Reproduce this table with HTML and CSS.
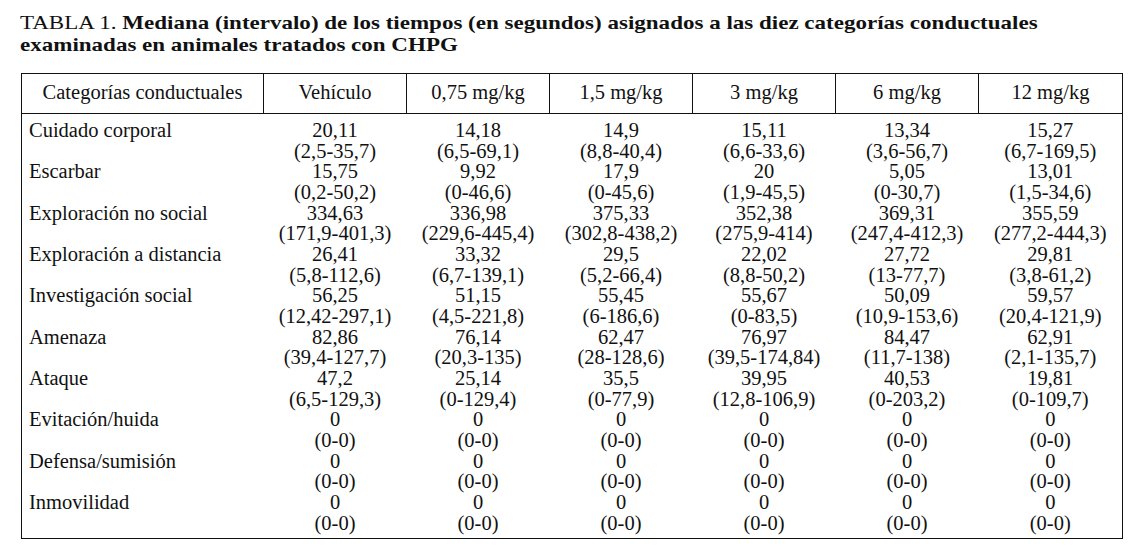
FILE: index.html
```html
<!DOCTYPE html>
<html lang="es">
<head>
<meta charset="utf-8">
<title>Tabla 1</title>
<link rel="stylesheet" href="styles.css">
</head>
<body>
<div class="page">
  <h1 class="title"><span class="label">TABLA 1.</span> Mediana (intervalo) de los tiempos (en segundos) asignados a las diez categorías conductuales<br>examinadas en animales tratados con CHPG</h1>
  <table class="data">
    <colgroup>
      <col class="c-cat"><col class="c-val"><col class="c-val"><col class="c-val"><col class="c-val"><col class="c-val"><col class="c-last">
    </colgroup>
    <thead>
      <tr>
        <th>Categorías conductuales</th>
        <th>Vehículo</th>
        <th>0,75 mg/kg</th>
        <th>1,5 mg/kg</th>
        <th>3 mg/kg</th>
        <th>6 mg/kg</th>
        <th>12 mg/kg</th>
      </tr>
    </thead>
    <tbody>
      <tr>
        <td class="cat">Cuidado corporal</td>
        <td>20,11<br>(2,5-35,7)</td>
        <td>14,18<br>(6,5-69,1)</td>
        <td>14,9<br>(8,8-40,4)</td>
        <td>15,11<br>(6,6-33,6)</td>
        <td>13,34<br>(3,6-56,7)</td>
        <td>15,27<br>(6,7-169,5)</td>
      </tr>
      <tr>
        <td class="cat">Escarbar</td>
        <td>15,75<br>(0,2-50,2)</td>
        <td>9,92<br>(0-46,6)</td>
        <td>17,9<br>(0-45,6)</td>
        <td>20<br>(1,9-45,5)</td>
        <td>5,05<br>(0-30,7)</td>
        <td>13,01<br>(1,5-34,6)</td>
      </tr>
      <tr>
        <td class="cat">Exploración no social</td>
        <td>334,63<br>(171,9-401,3)</td>
        <td>336,98<br>(229,6-445,4)</td>
        <td>375,33<br>(302,8-438,2)</td>
        <td>352,38<br>(275,9-414)</td>
        <td>369,31<br>(247,4-412,3)</td>
        <td>355,59<br>(277,2-444,3)</td>
      </tr>
      <tr>
        <td class="cat">Exploración a distancia</td>
        <td>26,41<br>(5,8-112,6)</td>
        <td>33,32<br>(6,7-139,1)</td>
        <td>29,5<br>(5,2-66,4)</td>
        <td>22,02<br>(8,8-50,2)</td>
        <td>27,72<br>(13-77,7)</td>
        <td>29,81<br>(3,8-61,2)</td>
      </tr>
      <tr>
        <td class="cat">Investigación social</td>
        <td>56,25<br>(12,42-297,1)</td>
        <td>51,15<br>(4,5-221,8)</td>
        <td>55,45<br>(6-186,6)</td>
        <td>55,67<br>(0-83,5)</td>
        <td>50,09<br>(10,9-153,6)</td>
        <td>59,57<br>(20,4-121,9)</td>
      </tr>
      <tr>
        <td class="cat">Amenaza</td>
        <td>82,86<br>(39,4-127,7)</td>
        <td>76,14<br>(20,3-135)</td>
        <td>62,47<br>(28-128,6)</td>
        <td>76,97<br>(39,5-174,84)</td>
        <td>84,47<br>(11,7-138)</td>
        <td>62,91<br>(2,1-135,7)</td>
      </tr>
      <tr>
        <td class="cat">Ataque</td>
        <td>47,2<br>(6,5-129,3)</td>
        <td>25,14<br>(0-129,4)</td>
        <td>35,5<br>(0-77,9)</td>
        <td>39,95<br>(12,8-106,9)</td>
        <td>40,53<br>(0-203,2)</td>
        <td>19,81<br>(0-109,7)</td>
      </tr>
      <tr>
        <td class="cat">Evitación/huida</td>
        <td>0<br>(0-0)</td>
        <td>0<br>(0-0)</td>
        <td>0<br>(0-0)</td>
        <td>0<br>(0-0)</td>
        <td>0<br>(0-0)</td>
        <td>0<br>(0-0)</td>
      </tr>
      <tr>
        <td class="cat">Defensa/sumisión</td>
        <td>0<br>(0-0)</td>
        <td>0<br>(0-0)</td>
        <td>0<br>(0-0)</td>
        <td>0<br>(0-0)</td>
        <td>0<br>(0-0)</td>
        <td>0<br>(0-0)</td>
      </tr>
      <tr>
        <td class="cat">Inmovilidad</td>
        <td>0<br>(0-0)</td>
        <td>0<br>(0-0)</td>
        <td>0<br>(0-0)</td>
        <td>0<br>(0-0)</td>
        <td>0<br>(0-0)</td>
        <td>0<br>(0-0)</td>
      </tr>
    </tbody>
  </table>
</div>
</body>
</html>
```

FILE: styles.css
```css
html, body {
  margin: 0;
  padding: 0;
  background: #ffffff;
}

.page {
  padding: 12px 0 0 20px;
  font-family: "Liberation Serif", "Times New Roman", serif;
  color: #111111;
}

.title {
  margin: 0;
  width: 880px;
  font-size: 19.5px;
  line-height: 21.6px;
  font-weight: bold;
  white-space: nowrap;
  transform: scaleX(1.18);
  transform-origin: left top;
}

.title .label {
  font-weight: normal;
}

.data {
  margin: 18px 0 0 1px;
  width: 1101px;
  table-layout: fixed;
  border-collapse: collapse;
  border: 1px solid #111111;
  font-size: 20.5px;
  line-height: 20.67px;
}

.c-cat { width: 242px; }
.c-val { width: 143px; }
.c-last { width: 144px; }

.data th {
  font-weight: normal;
  text-align: center;
  padding: 8px 2px 10px;
  border: 1px solid #111111;
  white-space: nowrap;
}

.data td {
  padding: 0 2px;
  text-align: center;
  vertical-align: top;
  white-space: nowrap;
}

.data td.cat {
  text-align: left;
  padding-left: 7px;
}

.data tbody tr:first-child td {
  padding-top: 6px;
}

.data tbody tr:last-child td {
  padding-bottom: 5px;
}
```
